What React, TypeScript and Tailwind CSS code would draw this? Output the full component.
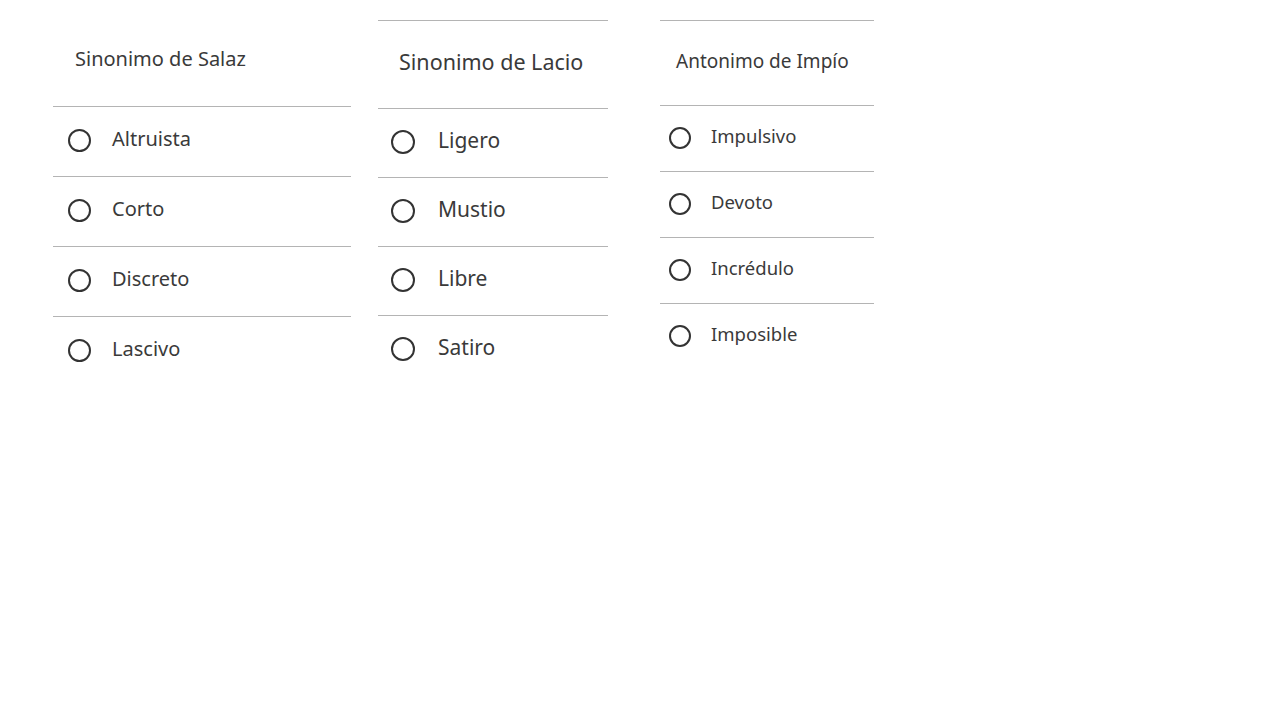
type Quiz = {
  title: string;
  options: string[];
  width: string;
  ml: string;
  topBorder: boolean;
  headH: string;
  headPad: string;
  titleSize: string;
  rowH: string;
  rowPl: string;
  ring: string;
  gap: string;
  optSize: string;
};

const QUIZZES: Quiz[] = [
  {
    title: 'Sinonimo de Salaz',
    options: ['Altruista', 'Corto', 'Discreto', 'Lascivo'],
    width: 'w-[298px]',
    ml: 'ml-[53px]',
    topBorder: false,
    headH: 'h-[86px]',
    headPad: 'pl-[22px] pb-[8px]',
    titleSize: 'text-[20px]',
    rowH: 'h-[70px]',
    rowPl: 'pl-[15px]',
    ring: 'w-[23px] h-[23px]',
    gap: 'gap-[21px]',
    optSize: 'text-[20px]',
  },
  {
    title: 'Sinonimo de Lacio',
    options: ['Ligero', 'Mustio', 'Libre', 'Satiro'],
    width: 'w-[230px]',
    ml: 'ml-[27px]',
    topBorder: true,
    headH: 'h-[87px]',
    headPad: 'pl-[21px] pb-[4px]',
    titleSize: 'text-[21.5px]',
    rowH: 'h-[69px]',
    rowPl: 'pl-[13px]',
    ring: 'w-[24px] h-[24px]',
    gap: 'gap-[23px]',
    optSize: 'text-[21px]',
  },
  {
    title: 'Antonimo de Impío',
    options: ['Impulsivo', 'Devoto', 'Incrédulo', 'Imposible'],
    width: 'w-[214px]',
    ml: 'ml-[52px]',
    topBorder: true,
    headH: 'h-[84px]',
    headPad: 'pl-[16px] pb-[4px]',
    titleSize: 'text-[19px]',
    rowH: 'h-[66px]',
    rowPl: 'pl-[9px]',
    ring: 'w-[22px] h-[22px]',
    gap: 'gap-[20px]',
    optSize: 'text-[18.5px]',
  },
];

function QuizCard({ quiz }: { quiz: Quiz }) {
  return (
    <div className={`${quiz.width} ${quiz.ml} shrink-0 ${quiz.topBorder ? 'border-t border-[#b4b4b4]' : ''}`}>
      <div className={`${quiz.headH} ${quiz.headPad} flex items-center`}>
        <h2 className={`${quiz.titleSize} text-[#3a3a3a] font-normal`}>{quiz.title}</h2>
      </div>
      {quiz.options.map(opt => (
        <label
          key={opt}
          className={`${quiz.rowH} ${quiz.rowPl} ${quiz.gap} flex items-center border-t border-[#b4b4b4] cursor-pointer`}
        >
          <span className={`${quiz.ring} rounded-full border-2 border-[#333] shrink-0 mb-[2px]`} />
          <span className={`${quiz.optSize} text-[#3a3a3a] mb-[5px]`}>{opt}</span>
        </label>
      ))}
    </div>
  );
}

export default function App() {
  return (
    <div className="w-[1280px] h-[720px] bg-white flex items-start pt-[20px] font-['Noto_Sans',sans-serif]">
      {QUIZZES.map(q => (
        <QuizCard key={q.title} quiz={q} />
      ))}
    </div>
  );
}
